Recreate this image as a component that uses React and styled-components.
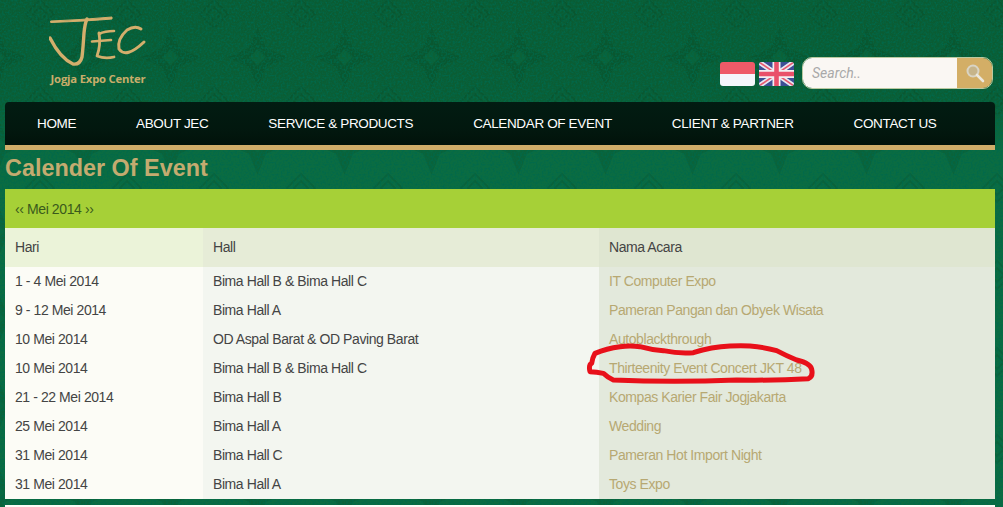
import React from "react";
import styled, { createGlobalStyle } from "styled-components";

const tileSvg = `<svg xmlns='http://www.w3.org/2000/svg' width='87' height='87' viewBox='0 0 87 87'>
<filter id='n' x='0' y='0' width='100%' height='100%'><feTurbulence type='fractalNoise' baseFrequency='.5' numOctaves='2' stitchTiles='stitch'/><feColorMatrix values='0 0 0 0 0  0 0 0 0 .14  0 0 0 0 .07  0 0 0 2.4 -.95'/></filter>
<g fill='#03401f' fill-opacity='.2'>
<path d='M43.5 13 L52 34 L74 43.5 L52 53 L43.5 74 L35 53 L13 43.5 L35 34 Z'/>
</g>
<rect x='38' y='38' width='11' height='11' fill='#0d7040' transform='rotate(45 43.5 43.5)' fill-opacity='.4'/>
<g fill='none' stroke='#03401f' stroke-opacity='.22' stroke-width='2'>
<path d='M0 -14 L14 0 L0 14 L-14 0 Z M87 -14 L101 0 L87 14 L73 0 Z M0 73 L14 87 L0 101 L-14 87 Z M87 73 L101 87 L87 101 L73 87 Z'/>
<path d='M0 -7 L7 0 L0 7 L-7 0 Z M87 -7 L94 0 L87 7 L80 0 Z M0 80 L7 87 L0 94 L-7 87 Z M87 80 L94 87 L87 94 L80 87 Z'/>
</g>
<rect width='87' height='87' filter='url(#n)'/>
</svg>`;
const tile = `data:image/svg+xml,${encodeURIComponent(tileSvg.replace(/\n/g, ""))}`;

const Global = createGlobalStyle`
  html, body { margin: 0; padding: 0; }
  body {
    width: 1003px; height: 507px; overflow: hidden;
    font-family: "Liberation Sans", Arial, sans-serif;
    background-color: #0a6239;
    background-image: url("${tile}"), linear-gradient(180deg, #0a5c33 0, #0a5e35 100px, #0b6c41 150px, #0b6c41 100%);
    background-size: 87px 87px, 100% 100%;
    background-position: 40px 14px, 0 0;
  }
`;

const Page = styled.div`
  position: relative;
  width: 1003px;
  height: 507px;
  padding: 0 8px 0 5px;
  box-sizing: border-box;
  overflow: hidden;
`;

const Header = styled.header`
  height: 102px;
  display: flex;
  justify-content: space-between;
`;

const LogoBox = styled.div`
  margin: 14px 0 0 45px;
  width: 96px;
  display: flex;
  flex-direction: column;
  align-items: center;
`;

const LogoCaption = styled.div`
  margin-top: 6px;
  font: bold 11.3px/14px "Open Sans", sans-serif;
  color: #c9ad6a;
  white-space: nowrap;
  letter-spacing: -0.2px;
`;

const Tools = styled.div`
  display: flex;
  align-items: flex-start;
  padding-top: 57px;
  margin-right: 2px;
`;

const Flag = styled.svg`
  width: 35px;
  height: 24px;
  margin-top: 5px;
  margin-right: 4px;
  border-radius: 3px;
  display: block;
`;

const Search = styled.div`
  display: flex;
  width: 191px;
  height: 32px;
  margin-left: 4px;
  border-radius: 10px;
  overflow: hidden;
  box-sizing: border-box;
  border: 1px solid #b9c9a0;
`;

const SearchText = styled.div`
  flex: 1;
  background: #faf7f3;
  color: #a9a9a9;
  font: italic 14px/30px Roboto, sans-serif;
  padding-left: 9px;
`;

const SearchBtn = styled.div`
  width: 35px;
  background: #d3ae66;
  display: flex;
  align-items: center;
  justify-content: center;
`;

const Nav = styled.nav`
  height: 43px;
  border-radius: 4px 4px 0 0;
  border-bottom: 5px solid #d0ad69;
  background: linear-gradient(180deg, #021c12, #02170e 70%, #01120a);
  display: flex;
  padding-left: 32px;
  gap: 60px;
`;

const NavItem = styled.a`
  color: #fff;
  font-size: 13.5px;
  line-height: 43px;
  letter-spacing: -0.36px;
  white-space: nowrap;
`;

const Title = styled.h1`
  margin: 4px 0 0;
  height: 35px;
  font-size: 23.4px;
  line-height: 28px;
  font-weight: bold;
  color: #c4ab70;
`;

const Calendar = styled.div`
  width: 990px;
`;

const Band = styled.div`
  height: 39px;
  background: #a6d037;
  color: #3a5a1c;
  font-size: 14px;
  letter-spacing: -0.4px;
  line-height: 40px;
  padding-left: 10px;
`;

const Row = styled.div`
  display: grid;
  grid-template-columns: 198px 396px 396px;
  height: ${p => p.$head ? 39 : 29}px;
  line-height: ${p => p.$head ? 39 : 29}px;
  font-size: 14px;
  letter-spacing: -0.42px;
`;

const Cell = styled.div`
  padding-left: 10px;
  white-space: nowrap;
  background: ${p => p.$head
    ? ["#ebf3d9", "#e6ecd7", "#dfe6d1"][p.$col]
    : ["#fcfcf6", "#f3f6f0", "#e3e9dc"][p.$col]};
  color: ${p => (p.$col === 2 && !p.$head) ? "#b7a872" : "#444"};
`;

const Footer = styled.div`
  position: absolute;
  left: 5px;
  top: 505px;
  width: 990px;
  height: 2px;
  background: #fcfcf6;
`;

const Scribble = styled.svg`
  position: absolute;
  left: 570px;
  top: 330px;
  width: 280px;
  height: 70px;
  pointer-events: none;
`;

const rows = [
  ["1 - 4 Mei 2014", "Bima Hall B & Bima Hall C", "IT Computer Expo"],
  ["9 - 12 Mei 2014", "Bima Hall A", "Pameran Pangan dan Obyek Wisata"],
  ["10 Mei 2014", "OD Aspal Barat & OD Paving Barat", "Autoblackthrough"],
  ["10 Mei 2014", "Bima Hall B & Bima Hall C", "Thirteenity Event Concert JKT 48"],
  ["21 - 22 Mei 2014", "Bima Hall B", "Kompas Karier Fair Jogjakarta"],
  ["25 Mei 2014", "Bima Hall A", "Wedding"],
  ["31 Mei 2014", "Bima Hall C", "Pameran Hot Import Night"],
  ["31 Mei 2014", "Bima Hall A", "Toys Expo"],
];

const navs = ["HOME", "ABOUT JEC", "SERVICE & PRODUCTS", "CALENDAR OF EVENT", "CLIENT & PARTNER", "CONTACT US"];

export default function App() {
  return (
    <Page>
      <Global />
      <Header>
        <LogoBox>
          <svg width="98" height="52" viewBox="50 15 98 52" fill="none" stroke="#d3ae6c" strokeLinecap="round" strokeLinejoin="round">
            <path d="M52 22 Q80 21 113 18 L113 20 Q90 22 52 23.5 Z" fill="#d3ae6c" strokeWidth="1" />
            <path d="M88 20 Q86 24 85 34 Q84 50 83 58 Q81 66 74 65 Q61 59 51 39" strokeWidth="3.4" />
            <path d="M100 34 Q102 46 98 57 Q106 60 115 58" strokeWidth="2.8" />
            <path d="M115 32 Q106 32 100 35 M93 42.5 L112 41" strokeWidth="2.6" />
            <path d="M142 30 Q136 26 128 31 Q118 40 120 50 Q127 60 145 43" strokeWidth="3" />
          </svg>
          <LogoCaption>Jogja Expo Center</LogoCaption>
        </LogoBox>
        <Tools>
          <Flag viewBox="0 0 35 24">
            <rect width="35" height="12" fill="#ee5a68" />
            <rect y="12" width="35" height="12" fill="#f4f6fb" />
          </Flag>
          <Flag viewBox="0 0 35 24">
            <rect width="35" height="24" fill="#3d4f95" />
            <path d="M0 0L35 24M35 0L0 24" stroke="#e8e8f2" strokeWidth="5" />
            <path d="M0 0L35 24M35 0L0 24" stroke="#e85a70" strokeWidth="1.6" />
            <path d="M17.5 0V24M0 12H35" stroke="#f2eef2" strokeWidth="8" />
            <path d="M17.5 0V24M0 12H35" stroke="#e9506a" strokeWidth="4.6" />
          </Flag>
          <Search>
            <SearchText>Search..</SearchText>
            <SearchBtn>
              <svg width="20" height="20" viewBox="0 0 20 20" fill="none">
                <circle cx="8" cy="8" r="5.5" stroke="#d9d4c4" strokeWidth="2" fill="#c6b48a" />
                <path d="M12 12L18 18" stroke="#ece8dc" strokeWidth="2.6" strokeLinecap="round" />
              </svg>
            </SearchBtn>
          </Search>
        </Tools>
      </Header>
      <Nav>
        {navs.map(n => <NavItem key={n}>{n}</NavItem>)}
      </Nav>
      <Title>Calender Of Event</Title>
      <Calendar>
        <Band>‹‹ Mei 2014 ››</Band>
        <Row $head>
          <Cell $head $col={0}>Hari</Cell>
          <Cell $head $col={1}>Hall</Cell>
          <Cell $head $col={2}>Nama Acara</Cell>
        </Row>
        {rows.map((r, i) => (
          <Row key={i}>
            {r.map((c, j) => <Cell key={j} $col={j}>{c}</Cell>)}
          </Row>
        ))}
      </Calendar>
      <Footer />
      <Scribble viewBox="0 0 840 210">
        <path
          d="M75 70 Q110 55 150 50 Q180 46 210 50 Q245 60 280 62 Q330 72 370 68 Q425 50 480 48 Q515 46 540 48 Q585 52 620 62 Q650 78 680 90 Q722 100 725 118 Q730 140 715 146 Q610 152 500 150 Q310 158 130 150 Q112 142 100 130 Q80 126 60 125 Q55 105 65 100 Q68 82 75 70 Z"
          fill="none" stroke="#e8101a" strokeWidth="15" strokeLinejoin="round" strokeLinecap="round"
        />
      </Scribble>
    </Page>
  );
}
